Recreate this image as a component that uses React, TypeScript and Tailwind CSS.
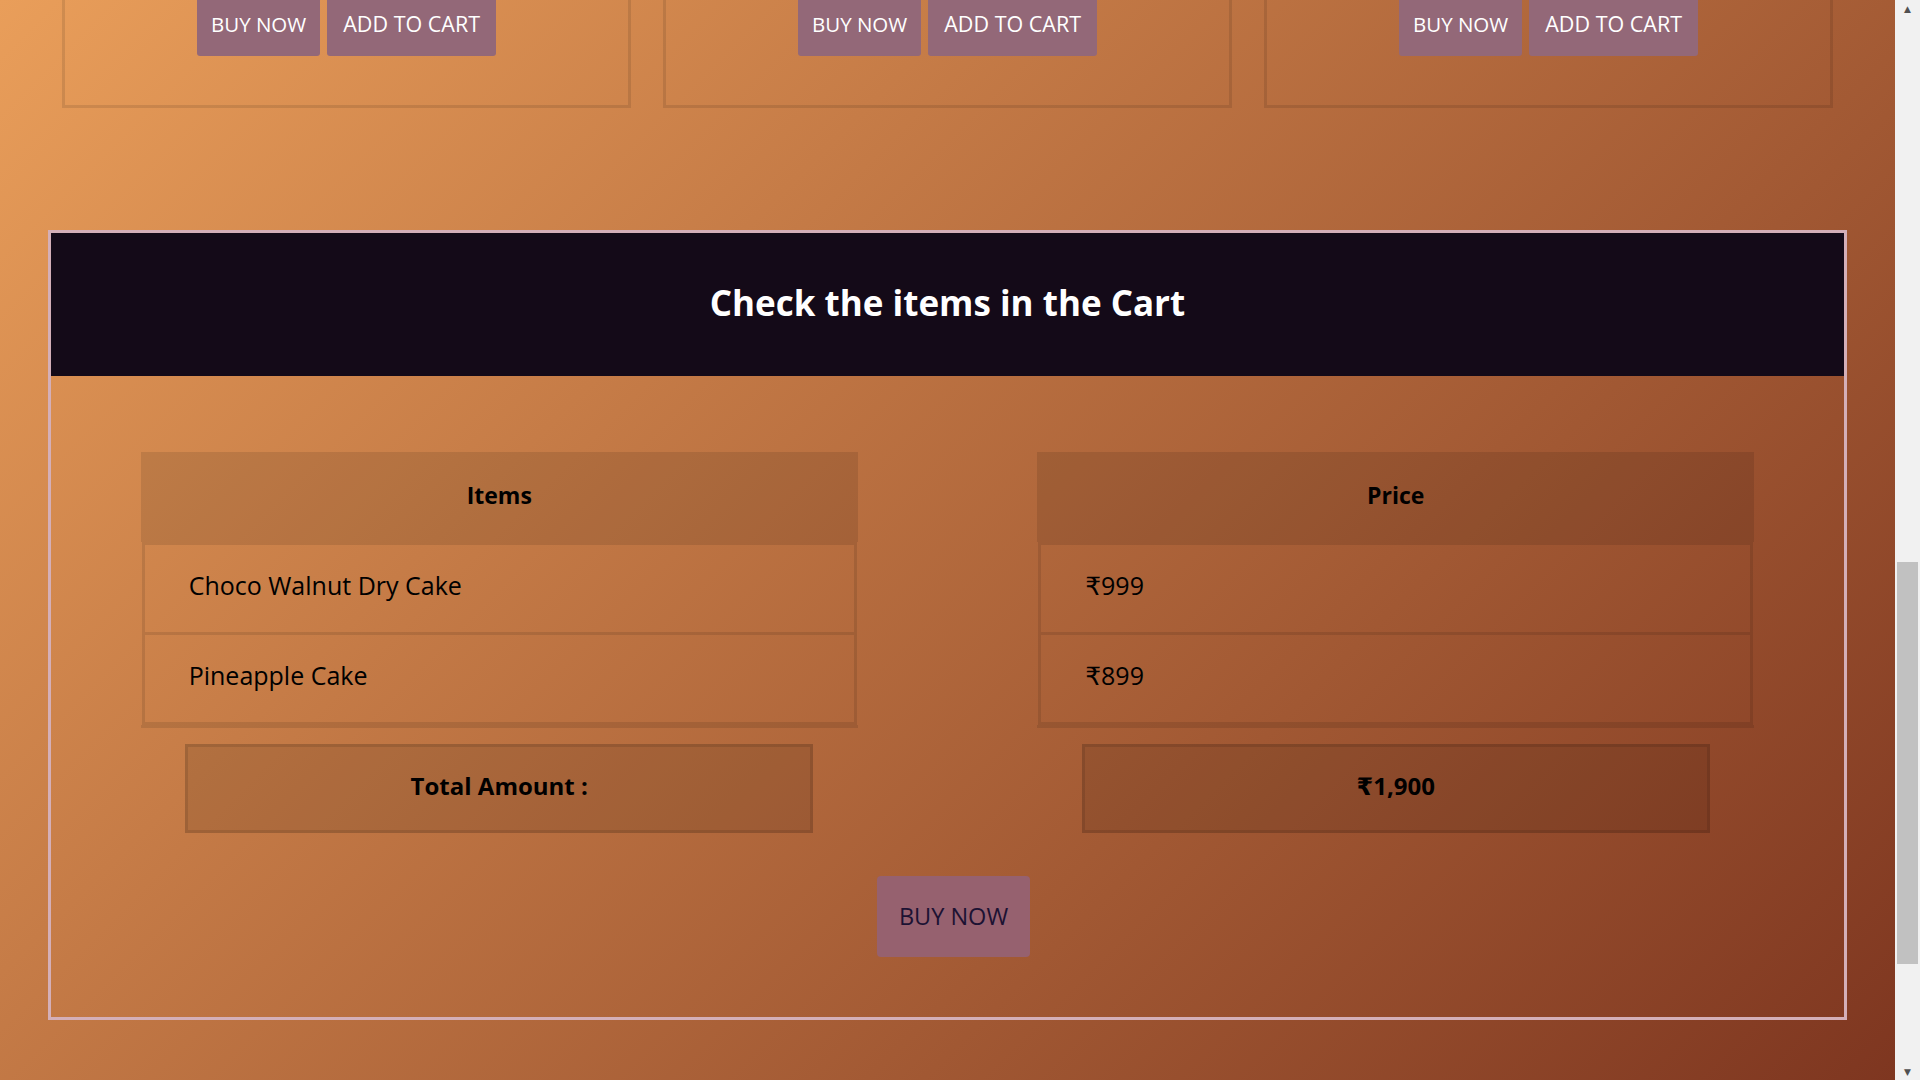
import React from 'react'

interface CartItem {
    id: number,
    name: string,
    price: number
}

const cartItems: CartItem[] = [
    { id: 1, name: 'Choco Walnut Dry Cake', price: 999 },
    { id: 2, name: 'Pineapple Cake', price: 899 },
]

// the total shown in the cart (rounded, as on the page)
const CART_TOTAL = 1900

const formatPrice = (n: number) => '₹' + n.toLocaleString('en-IN')

// cards from the product list, only their bottom edge is visible
const ProductCardBottom = () => {
    return (
        <div className="h-[108px] border-x-[3px] border-b-[3px] border-black/10 flex justify-center">
            <div className="flex gap-[7px] h-[56px]">
                <button className="h-full px-[14px] pb-[7px] flex items-center bg-[#936878] text-white text-[20.5px] rounded-b-[3px]">BUY NOW</button>
                <button className="h-full px-[16px] pb-[7px] flex items-center bg-[#936878] text-white text-[21.5px] rounded-b-[3px]">ADD TO CART</button>
            </div>
        </div>
    )
}

const CartColumn = ({ title, cells, total }: { title: string, cells: string[], total: string }) => {
    return (
        <div className="flex flex-col items-center">
            <div className="w-[80%] border-b-[3px] border-black/10">
                <div className="h-[90px] pb-[3px] bg-black/10 flex items-center justify-center text-[23px] font-bold text-black">{title}</div>
                {cells.map((cell, index) => (
                    <div
                        key={index}
                        className={(index === 0 ? 'border-[3px] h-[93px] ' : 'border-x-[3px] border-b-[3px] h-[90px] ') + 'border-black/10 mx-px pb-[6px] flex items-center px-[44px] text-[25px] text-black'}
                    >
                        {cell}
                    </div>
                ))}
            </div>
            <div className="w-[70%] mt-[16px] h-[89px] pb-[5px] border-[3px] border-black/10 bg-black/10 flex items-center justify-center text-[24px] font-bold text-black">
                {total}
            </div>
        </div>
    )
}

const App = () => {
    return (
        <div className="w-[1920px] h-[1080px] overflow-hidden flex font-['Open_Sans','DejaVu_Sans',sans-serif]">
            <div className="flex-1 h-full bg-[linear-gradient(135deg,#e99e5a,#7e3620)] flex flex-col">
                <div className="grid grid-cols-3 gap-8 px-[62px]">
                    <ProductCardBottom />
                    <ProductCardBottom />
                    <ProductCardBottom />
                </div>

                <div className="mx-12 mt-[122px] border-[3px] border-[#d4afb8] pb-[60px]">
                    <div className="h-[143px] pb-[2px] bg-[#140a18] flex items-center justify-center">
                        <h2 className="text-[35px] font-bold text-white">Check the items in the Cart</h2>
                    </div>

                    <div className="grid grid-cols-2 mt-[76px]">
                        <CartColumn title="Items" cells={cartItems.map((i) => i.name)} total="Total Amount :" />
                        <CartColumn title="Price" cells={cartItems.map((i) => formatPrice(i.price))} total={formatPrice(CART_TOTAL)} />
                    </div>

                    <div className="flex justify-center mt-[43px] pl-[12px]">
                        <button className="w-[153px] h-[81px] bg-[#96616f] text-[#1c1233] text-[23.5px] rounded-[4px]">BUY NOW</button>
                    </div>
                </div>
            </div>

            {/* scrollbar */}
            <div className="w-[25px] h-full bg-[#f1f1f1] flex flex-col items-center">
                <div className="h-[17px] flex items-center text-[9px] text-[#505050] leading-none">▲</div>
                <div className="mt-[545px] w-[21px] h-[402px] bg-[#c1c1c1]"></div>
                <div className="flex-1"></div>
                <div className="h-[17px] flex items-center text-[9px] text-[#505050] leading-none">▼</div>
            </div>
        </div>
    )
}

export default App
